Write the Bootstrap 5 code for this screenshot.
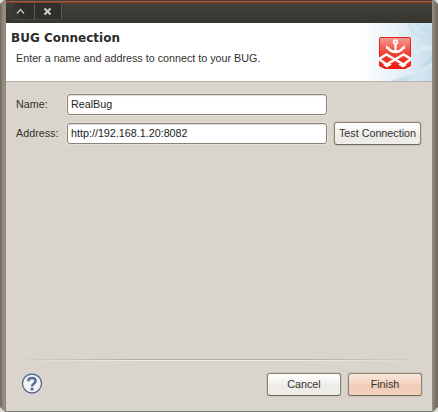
<!DOCTYPE html>
<html lang="en">
<head>
<meta charset="utf-8">
<title>BUG Connection</title>
<link href="https://cdn.jsdelivr.net/npm/bootstrap@5.3.0/dist/css/bootstrap.min.css" rel="stylesheet">
<style>
body{font:10.76px/14px "Liberation Sans",Arial,sans-serif;color:#33322f;background:#dcdcdc;width:438px;height:412px;overflow:hidden}
.dialog-frame{width:438px;height:412px;padding:0 6px 1px;background:linear-gradient(90deg,#70685e 0,#857c70 2px,#9b9285 4px,#8b8276 6px,#777 6px,#777 432px,#9b9285 432px,#877e72 434px,#70685e 438px);clip-path:polygon(4px 0,434px 0,438px 4px,438px 407px,433px 412px,5px 412px,0 407px,0 4px)}
.dialog-pane{background:#d9d5cc}
.title-strip{height:23px;flex:none;background:linear-gradient(#403f3b 0,#403f3b 1px,#a55735 1px,#a55735 2px,#7d452c 2px,#7d452c 3px,#5b3a2b 3px,#4b3b33 4px,#403e39 4px,#36352f 23px);padding:3px 0 0 7px}
.win-controls{height:17px;background:linear-gradient(90deg,#3a3934,#302f2b 20%);border-bottom:1px solid #484640}
.win-controls button{width:27px;height:16px;padding:0;border:0;border-right:1px solid #5b5954;background:none}
.win-controls button:first-child{width:22px}
.banner{height:59px;flex:none;border-bottom:1px solid #b8b3aa;background:#fff;padding:7px 21px 0 5px}
.banner-art{right:0;top:0}
.banner h1{font:bold 12px/15px "DejaVu Sans",sans-serif;margin:0;padding-top:1px;color:#2c2c2b}
.banner p{margin:5px 0 0 5px}
.brand-tile{margin-top:7px}
.fields{padding:11px 11px 0 10px}
.field-line{height:23px;margin-bottom:6px}
.field-line label{width:51px;margin-top:-1px}
.field-line .form-control{width:260px;height:21px;padding:2px 3px 3px;font-size:10.76px;line-height:14px;border:1px solid #8c8174;border-radius:3px;color:#222;background:#fff;box-shadow:inset 0 1px 1px #ddd,0 0 0 1px #e4e0d9}
.push{height:23px;padding:0 0 1px;font-size:10.76px;line-height:20px;color:#33322f;border:1px solid #8a8175;border-bottom-color:#70685d;border-radius:3px;background:linear-gradient(#fff,#f3f1ef 45%,#edeae7 55%,#efedea);box-shadow:0 0 0 1px #cbc5bb}
.push-test{width:87px;margin-left:7px}
.push-foot{width:74px}
.push-finish{background:linear-gradient(#fbe7dc,#f3d3c1 45%,#efcbb6 55%,#f1d2bf)}
.rule-line{height:2px;margin:0 4px 12px;background:linear-gradient(90deg,#d9d5cc,#b5ad9e 30%,#b5ad9e 70%,#d9d5cc) top/100% 1px no-repeat,linear-gradient(90deg,#d9d5cc,#eeebe5 30%,#eeebe5 70%,#d9d5cc) bottom/100% 1px no-repeat}
.foot{height:38px;padding:0 10px 0 15px}
.foot .gap-btn{gap:7px}
</style>
<script src="https://cdn.jsdelivr.net/npm/bootstrap@5.3.0/dist/js/bootstrap.bundle.min.js"></script>
</head>
<body>
<main class="dialog-frame">
<div class="dialog-pane d-flex flex-column h-100">
  <header class="title-strip d-flex">
    <div class="win-controls d-flex">
      <button class="d-flex align-items-center justify-content-center" aria-label="Roll up"><svg width="22" height="16"><path d="M4 10.5L7.5 6.5L11 10.5" fill="none" stroke="#c9c7c0" stroke-width="1.4"/></svg></button>
      <button class="d-flex" aria-label="Close"><svg width="26" height="16"><path d="M9.5 5.5L15.5 11.5M15.5 5.5L9.5 11.5" fill="none" stroke="#d2d0c8" stroke-width="2"/></svg></button>
    </div>
  </header>
  <section class="banner position-relative d-flex justify-content-between">
    <svg class="banner-art position-absolute" width="76" height="58">
      <defs>
        <linearGradient id="sky" gradientUnits="userSpaceOnUse" x1="4" y1="0" x2="76" y2="0"><stop offset="0" stop-color="#fff"/><stop offset=".5" stop-color="#e8f2f7"/><stop offset="1" stop-color="#c9dfec"/></linearGradient>
        <filter id="soft"><feGaussianBlur stdDeviation="1.5"/></filter>
      </defs>
      <path d="M0 0H76V58H0Z" fill="url(#sky)"/>
      <g fill="none" filter="url(#soft)">
        <path d="M52 0Q58 14 78 19M60 0Q66 8 78 9" stroke="#bdd7e6" stroke-width="1.500"/>
        <path d="M36 60Q62 54 78 34" stroke="#bdd7e6" stroke-width="4"/>
        <path d="M60 30Q68 22 78 26M52 53Q65 48 78 41" stroke="#e8f2f7" stroke-width="2"/>
      </g>
    </svg>
    <div class="position-relative">
      <h1>BUG Connection</h1>
      <p>Enter a name and address to connect to your BUG.</p>
    </div>
    <svg class="brand-tile position-relative flex-shrink-0" width="32" height="32" viewBox="0 0 32 32" aria-label="BUG">
      <defs><linearGradient id="red" x2="0" y2="1"><stop stop-color="#f6a099"/><stop offset=".5" stop-color="#ef4238"/><stop offset="1" stop-color="#ec1c0b"/></linearGradient></defs>
      <rect width="32" height="32" rx="2" fill="url(#red)"/>
      <path d="M.5 22V2Q.5.5 2 .5H30Q31.500.5 31.500 2V22" fill="none" stroke="#e5251b"/>
      <g fill="none" stroke="#fff">
        <circle cx="16.500" cy="5" r="1.800" stroke-width="1.700"/>
        <path d="M16.500 7V15" stroke-width="2.200"/>
        <path d="M9 10.500Q10.500 14.500 16.500 15Q22.500 14.500 24 10.500" stroke-width="2.300"/>
        <path d="M0 22L7.500 17.500L16 22.500L24.500 17.500L32 22L24.500 27.500L16 22.500L7.500 27.500Z" stroke-width="2.600"/>
      </g>
      <path d="M7 12V8L11.500 12ZM26 12V8L21.500 12Z" fill="#fff"/>
      <path d="M4 28L8 30.500L13 27.500L8 26ZM28 28L24 30.500L19 27.500L24 26Z" fill="#fff"/>
      <path d="M0 29L6 32H0ZM32 29L26 32H32Z" fill="#e8f0f5"/>
    </svg>
  </section>
  <form class="fields flex-grow-1">
    <div class="field-line d-flex align-items-center"><label for="n">Name:</label><input id="n" class="form-control flex-shrink-0" value="RealBug"></div>
    <div class="field-line d-flex align-items-center"><label for="a">Address:</label><input id="a" class="form-control flex-shrink-0" value="http://192.168.1.20:8082"><button type="button" class="btn push push-test flex-shrink-0">Test Connection</button></div>
  </form>
  <div class="rule-line flex-shrink-0"></div>
  <footer class="foot d-flex justify-content-between align-items-start flex-shrink-0">
    <svg width="22" height="22" viewBox="0 0 22 22" aria-label="Help"><circle cx="11" cy="10.500" r="9.500" fill="#f2f2f2" stroke="#566b91" stroke-width="1.300"/><path d="M7.300 8.200Q7.300 5 11.200 5Q14.600 5 14.600 8Q14.600 9.500 12.700 10.800Q11 11.800 11 13.500" fill="none" stroke="#5a6f96" stroke-width="2.500"/><rect x="9.500" y="14.800" width="3" height="2.600" rx="1" fill="#566b91"/></svg>
    <div class="gap-btn d-flex"><button class="btn push push-foot">Cancel</button><button class="btn push push-foot push-finish">Finish</button></div>
  </footer>
</div>
</main>
</body>
</html>
